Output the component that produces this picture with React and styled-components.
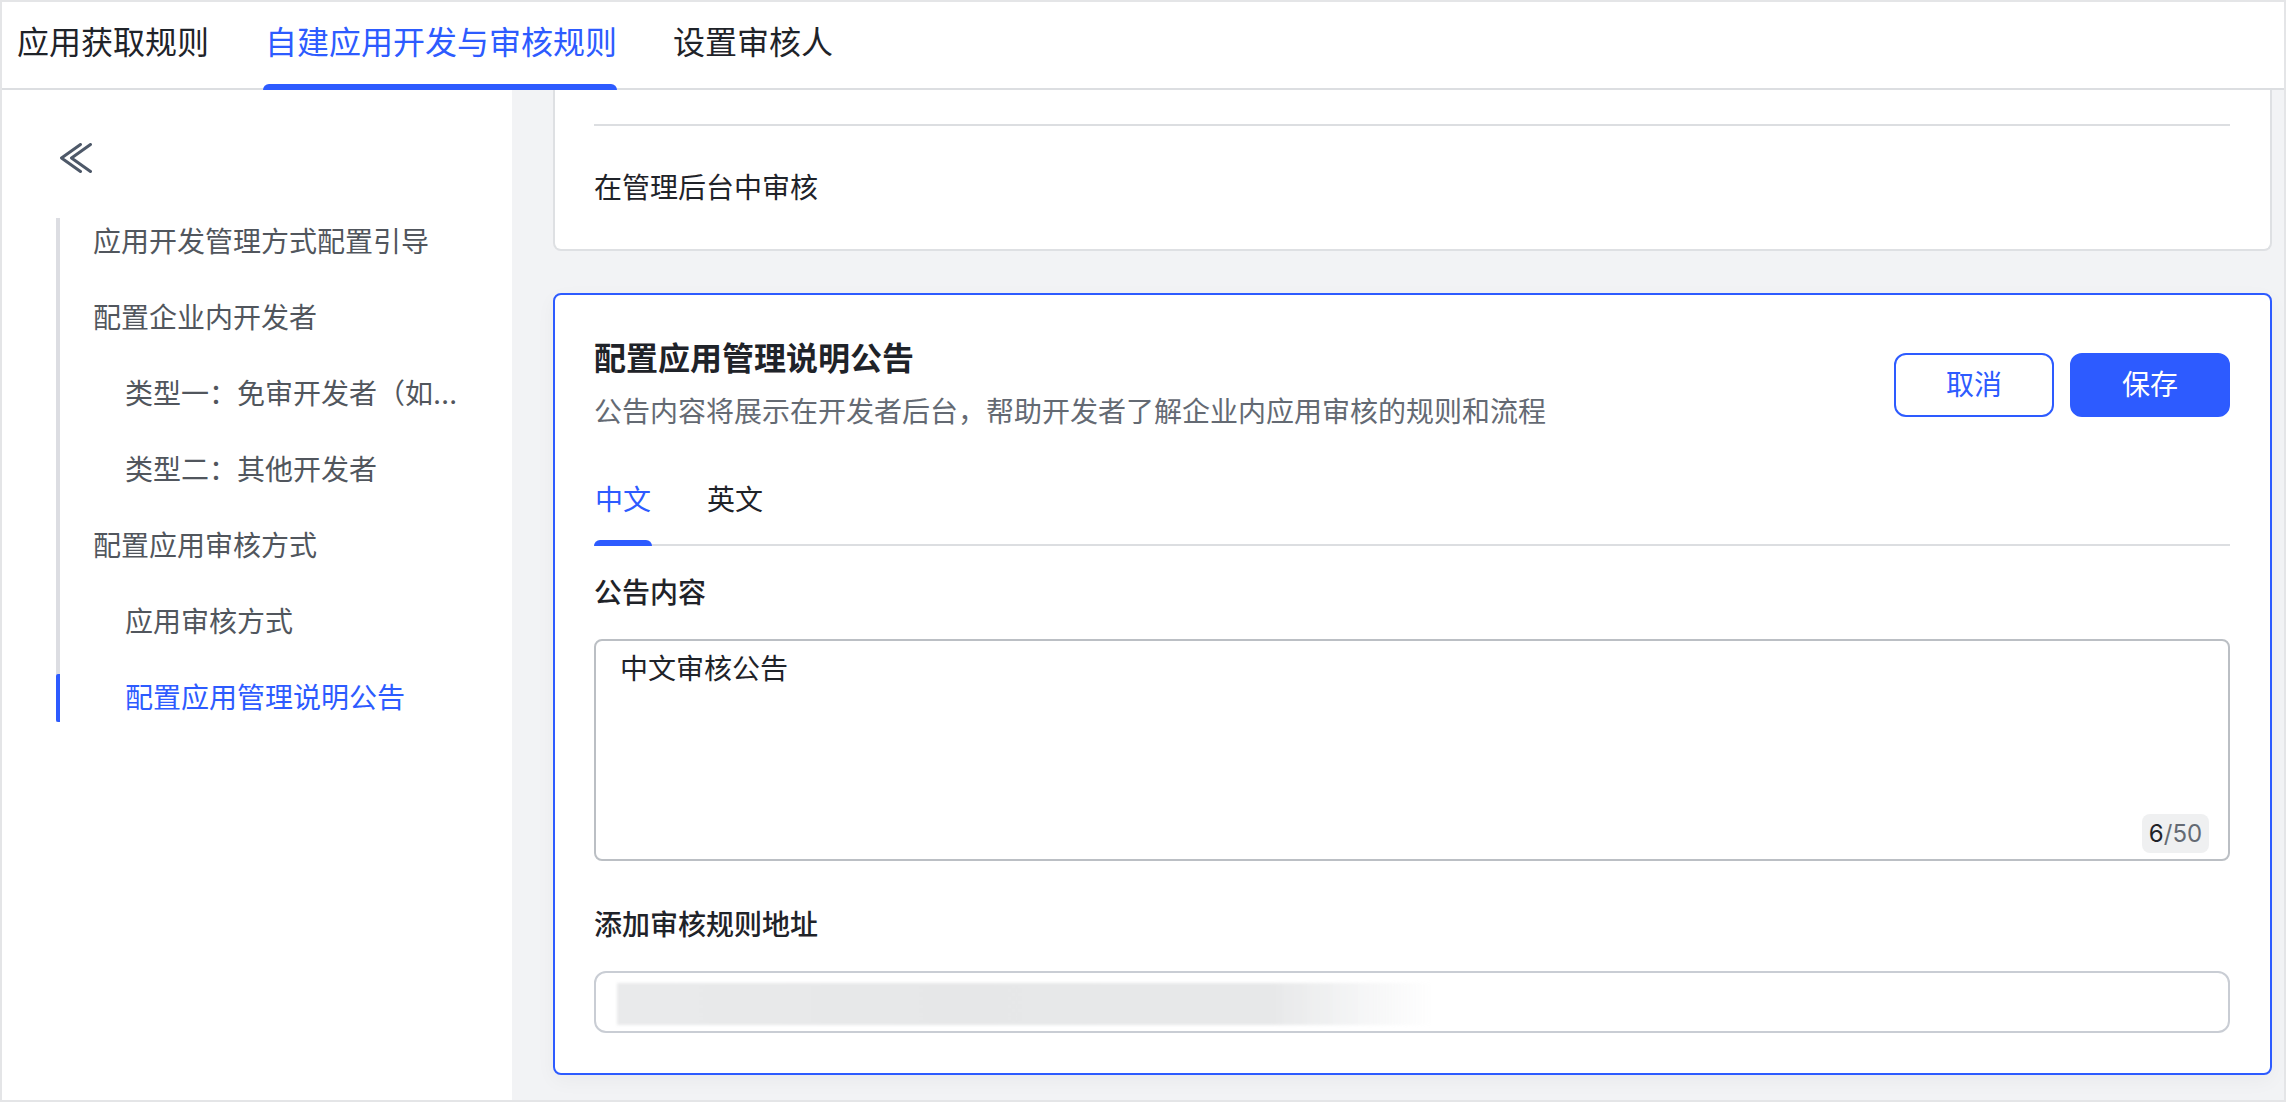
import styled, { createGlobalStyle } from "styled-components";

const blue = "#2d5bff";

const GlobalStyle = createGlobalStyle`
    html, body {
        margin: 0;
        padding: 0;
        background: #ffffff;
    }
    * {
        box-sizing: border-box;
    }
    body {
        font-family: Inter, "Noto Sans CJK SC", "Noto Sans", sans-serif;
        color: #1f2329;
    }
`;

const navItems = [
    { label: "应用开发管理方式配置引导", level: 1 },
    { label: "配置企业内开发者", level: 1 },
    { label: "类型一：免审开发者（如企业管理员）", level: 2 },
    { label: "类型二：其他开发者", level: 2 },
    { label: "配置应用审核方式", level: 1 },
    { label: "应用审核方式", level: 2 },
    { label: "配置应用管理说明公告", level: 2, active: true },
];

const App = () => {
    return (
        <>
        <GlobalStyle />
        <Page>
            <TopTabs>
                <TopTab>应用获取规则</TopTab>
                <TopTab $active>自建应用开发与审核规则</TopTab>
                <TopTab>设置审核人</TopTab>
            </TopTabs>
            <Body>
                <Sidebar>
                    <CollapseButton>
                        <svg width="32" height="30" viewBox="0 0 32 30" fill="none">
                            <path d="M20.5 1.5 L1.5 15 L20.5 28.5" stroke="#4e5969" strokeWidth="3" strokeLinecap="round" strokeLinejoin="round" />
                            <path d="M30.5 1.5 L11.5 15 L30.5 28.5" stroke="#4e5969" strokeWidth="3" strokeLinecap="round" strokeLinejoin="round" />
                        </svg>
                    </CollapseButton>
                    <Nav>
                        {navItems.map((item) => (
                            <NavItem key={item.label} $level={item.level} $active={item.active}>
                                <NavText>{item.label}</NavText>
                            </NavItem>
                        ))}
                    </Nav>
                </Sidebar>
                <Main>
                    <PrevCard>
                        <PrevTail />
                        <Divider />
                        <PrevText>在管理后台中审核</PrevText>
                    </PrevCard>
                    <EditCard>
                        <CardHeader>
                            <HeaderText>
                                <CardTitle>配置应用管理说明公告</CardTitle>
                                <CardDesc>公告内容将展示在开发者后台，帮助开发者了解企业内应用审核的规则和流程</CardDesc>
                            </HeaderText>
                            <Actions>
                                <Button>取消</Button>
                                <Button $primary>保存</Button>
                            </Actions>
                        </CardHeader>
                        <LangTabs>
                            <LangTab $active>中文</LangTab>
                            <LangTab>英文</LangTab>
                        </LangTabs>
                        <FieldLabel>公告内容</FieldLabel>
                        <TextAreaWrap>
                            <TextArea defaultValue="中文审核公告" readOnly />
                            <Counter><b>6</b>/50</Counter>
                        </TextAreaWrap>
                        <FieldLabel $gap={44}>添加审核规则地址</FieldLabel>
                        <InputBox>
                            <Redacted />
                        </InputBox>
                    </EditCard>
                </Main>
            </Body>
        </Page>
        </>
    );
};

export default App;


const Page = styled.div`
    width: 100%;
    height: 100vh;
    border: 2px solid #e4e5e7;
    display: flex;
    flex-direction: column;
    overflow: hidden;
`;

const TopTabs = styled.div`
    display: flex;
    gap: 56px;
    padding: 0 15px;
    height: 88px;
    border-bottom: 2px solid #dcdee1;
    flex-shrink: 0;
    background: #fff;
`;

const TopTab = styled.div`
    position: relative;
    padding: 19px 0 0;
    font-size: 32px;
    line-height: 44px;
    color: ${(p) => (p.$active ? blue : "#1f2329")};
    white-space: nowrap;

    &::after {
        content: "";
        display: ${(p) => (p.$active ? "block" : "none")};
        position: absolute;
        left: -2px;
        right: 0;
        bottom: -2px;
        height: 6px;
        border-radius: 6px 6px 0 0;
        background: ${blue};
    }
`;

const Body = styled.div`
    flex: 1;
    display: flex;
    min-height: 0;
`;

const Sidebar = styled.div`
    width: 510px;
    flex-shrink: 0;
    background: #fff;
    padding: 53px 54px 0 54px;
    display: flex;
    flex-direction: column;
`;

const CollapseButton = styled.div`
    display: flex;
    padding-left: 4px;
    height: 30px;
    margin-bottom: 45px;
`;

const Nav = styled.div`
    display: flex;
    flex-direction: column;
    gap: 28px;
    border-left: 4px solid #dcdde2;
`;

const NavItem = styled.div`
    margin-left: -4px;
    height: 48px;
    border-left: 4px solid ${(p) => (p.$active ? blue : "transparent")};
    border-radius: 2px;
    padding-left: ${(p) => (p.$level === 2 ? 65 : 33)}px;
    font-size: 28px;
    line-height: 48px;
    color: ${(p) => (p.$active ? blue : "#51565d")};
    min-width: 0;
`;

const NavText = styled.div`
    white-space: nowrap;
    overflow: hidden;
    text-overflow: ellipsis;
`;

const Main = styled.div`
    flex: 1;
    background: #f2f3f5;
    padding: 0 12px 0 41px;
    display: flex;
    flex-direction: column;
    gap: 42px;
    overflow: hidden;
`;

const PrevCard = styled.div`
    background: #fff;
    border: 2px solid #dee0e3;
    border-top: none;
    border-radius: 0 0 8px 8px;
    padding: 0 40px 41px 39px;
`;

const PrevTail = styled.div`
    height: 34px;
`;

const Divider = styled.div`
    height: 2px;
    background: #dcdee1;
`;

const PrevText = styled.div`
    margin-top: 42px;
    font-size: 28px;
    line-height: 40px;
    color: #1f2329;
`;

const EditCard = styled.div`
    background: #fff;
    border: 2px solid ${blue};
    border-radius: 8px;
    padding: 42px 40px 40px 39px;
    display: flex;
    flex-direction: column;
    box-shadow: 0 6px 20px rgba(31, 35, 41, 0.04);
`;

const CardHeader = styled.div`
    display: flex;
    align-items: center;
    justify-content: space-between;
`;

const HeaderText = styled.div`
    display: flex;
    flex-direction: column;
`;

const CardTitle = styled.div`
    font-size: 32px;
    line-height: 44px;
    font-weight: 600;
    color: #1f2329;
`;

const CardDesc = styled.div`
    margin-top: 11px;
    font-size: 28px;
    line-height: 40px;
    color: #646a73;
`;

const Actions = styled.div`
    display: flex;
    gap: 16px;
`;

const Button = styled.button`
    width: 160px;
    height: 64px;
    border-radius: 12px;
    border: 2px solid ${blue};
    background: ${(p) => (p.$primary ? blue : "#fff")};
    color: ${(p) => (p.$primary ? "#fff" : blue)};
    font-family: inherit;
    font-size: 28px;
    line-height: 40px;
    padding: 0;
    cursor: pointer;
`;

const LangTabs = styled.div`
    margin-top: 48px;
    display: flex;
    gap: 56px;
    border-bottom: 2px solid #dcdee1;
    padding-left: 1px;
`;

const LangTab = styled.div`
    position: relative;
    padding-bottom: 24px;
    font-size: 28px;
    line-height: 40px;
    color: ${(p) => (p.$active ? blue : "#1f2329")};

    &::after {
        content: "";
        display: ${(p) => (p.$active ? "block" : "none")};
        position: absolute;
        left: -1px;
        right: -1px;
        bottom: -2px;
        height: 6px;
        border-radius: 6px 6px 0 0;
        background: ${blue};
    }
`;

const FieldLabel = styled.div`
    margin-top: ${(p) => p.$gap || 27}px;
    font-size: 28px;
    line-height: 40px;
    font-weight: 500;
    color: #1f2329;
`;

const TextAreaWrap = styled.div`
    position: relative;
    margin-top: 26px;
`;

const TextArea = styled.textarea`
    display: block;
    width: 100%;
    height: 222px;
    border: 2px solid #bbbfc4;
    border-radius: 8px;
    padding: 8px 24px;
    font-family: inherit;
    font-size: 28px;
    line-height: 40px;
    color: #1f2329;
    resize: none;
    outline: none;
    background: #fff;
`;

const Counter = styled.div`
    position: absolute;
    right: 21px;
    bottom: 8px;
    width: 67px;
    height: 39px;
    border-radius: 8px;
    background: #eff0f1;
    font-size: 24px;
    line-height: 39px;
    text-align: center;
    color: #646a73;

    b {
        font-weight: 400;
        color: #1f2329;
    }
`;

const InputBox = styled.div`
    margin-top: 26px;
    height: 62px;
    border: 2px solid #c9cdd4;
    border-radius: 12px;
    padding: 0 21px;
    display: flex;
    align-items: center;
`;

const Redacted = styled.div`
    width: 818px;
    height: 42px;
    margin-top: 4px;
    background: linear-gradient(90deg, #e9eaeb 0%, #e6e7e8 40%, #e7e8e9 80%, rgba(240, 241, 242, 0.6) 92%, rgba(255, 255, 255, 0) 100%);
    filter: blur(1.5px);
`;
